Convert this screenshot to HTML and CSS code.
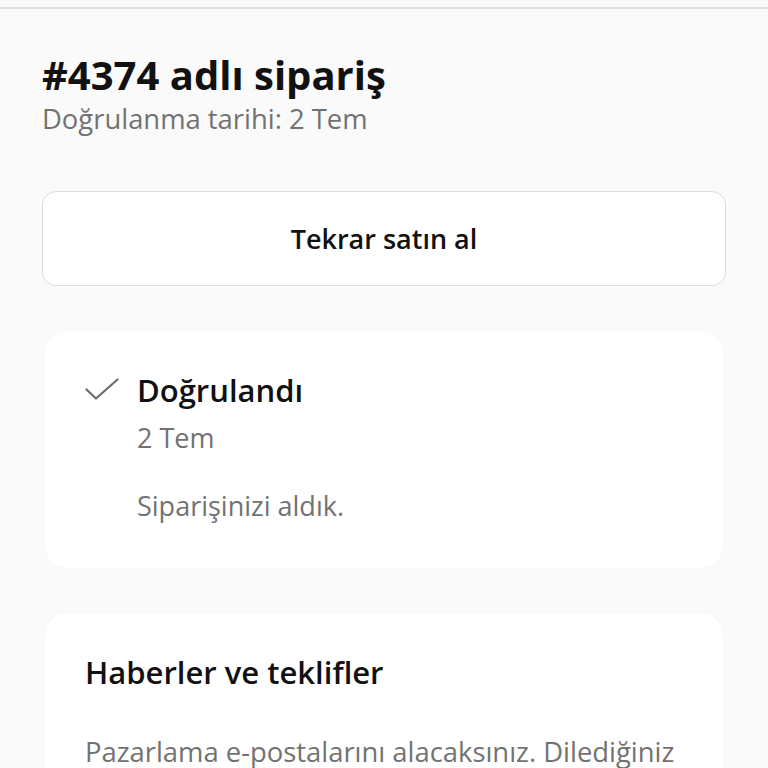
FILE: index.html
```html
<!DOCTYPE html>
<html lang="tr">
<head>
<meta charset="utf-8">
<title>#4374 adlı sipariş</title>
<link rel="stylesheet" href="styles.css">
</head>
<body>
  <div class="topbar"></div>
  <main class="page">
    <header class="order-head">
      <h1 class="order-title">#4374 adlı sipariş</h1>
      <p class="order-date">Doğrulanma tarihi: 2 Tem</p>
    </header>

    <button class="buy-again" type="button">Tekrar satın al</button>

    <section class="card status-card">
      <div class="status-row">
        <svg class="check" viewBox="0 0 34 22" width="34" height="22" aria-hidden="true">
          <path d="M1.5 11.5 L11 20.5 L32.5 1.5" fill="none" stroke="#6b6b6b" stroke-width="2.2" stroke-linecap="round" stroke-linejoin="round"/>
        </svg>
        <div class="status-body">
          <h2 class="status-title">Doğrulandı</h2>
          <p class="status-date">2 Tem</p>
          <p class="status-note">Siparişinizi aldık.</p>
        </div>
      </div>
    </section>

    <section class="card news-card">
      <h2 class="news-title">Haberler ve teklifler</h2>
      <p class="news-text">Pazarlama e-postalarını alacaksınız. Dilediğiniz zaman abonelikten çıkabilirsiniz.</p>
    </section>
  </main>
</body>
</html>
```

FILE: styles.css
```css
html, body {
  margin: 0;
  padding: 0;
}

body {
  background: #fafafa;
  font-family: "Open Sans", "Noto Sans", sans-serif;
  color: #111;
  overflow: hidden;
  height: 768px;
}

.topbar {
  height: 7px;
  border-bottom: 2px solid #e0e0e0;
  background: #fafafa;
}

.page {
  padding: 0 42px;
  display: flex;
  flex-direction: column;
}

.order-head {
  padding-top: 42px;
}

.order-title {
  margin: 0;
  font-size: 40px;
  font-weight: 700;
  line-height: 48px;
  color: #111;
}

.order-date {
  margin: 0;
  font-size: 27.4px;
  line-height: 40px;
  color: #727272;
}

.buy-again {
  margin-top: 52px;
  height: 95px;
  background: #fff;
  border: 1.5px solid #dcdcdc;
  border-radius: 14px;
  font-family: inherit;
  font-size: 27px;
  font-weight: 600;
  color: #111;
}

.card {
  background: #fff;
  border-radius: 22px;
  margin: 0 3px;
  box-shadow: 0 0 3px rgba(0, 0, 0, 0.03);
}

.status-card {
  margin-top: 45px;
  height: 237px;
  box-sizing: border-box;
  padding: 38px 40px 0;
}

.status-row {
  display: flex;
  align-items: flex-start;
  gap: 18px;
}

.check {
  margin-top: 9px;
  flex: none;
}

.status-title {
  margin: 0;
  font-size: 31px;
  font-weight: 600;
  line-height: 42px;
  color: #111;
}

.status-date {
  margin: 9px 0 0;
  font-size: 27px;
  line-height: 36px;
  color: #727272;
}

.status-note {
  margin: 32px 0 0;
  font-size: 27px;
  line-height: 36px;
  color: #727272;
}

.news-card {
  margin-top: 45px;
  padding: 38px 40px 0;
  height: 300px;
}

.news-title {
  margin: 0;
  font-size: 31px;
  font-weight: 600;
  line-height: 42px;
  color: #111;
}

.news-text {
  margin: 40px 0 0;
  font-size: 27.4px;
  line-height: 38px;
  color: #727272;
}
```
